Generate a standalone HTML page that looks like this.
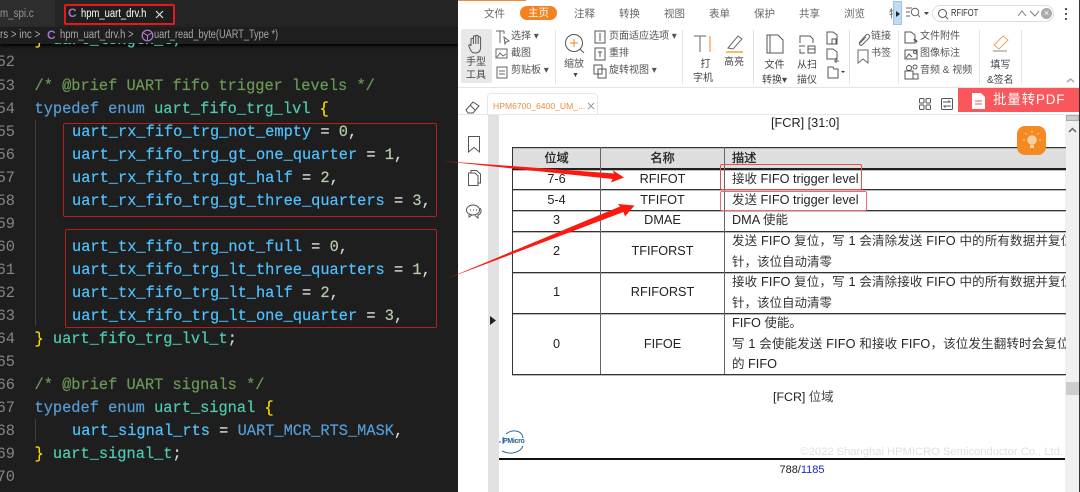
<!DOCTYPE html>
<html lang="zh"><head><meta charset="utf-8"><title>hpm_uart_drv.h</title>
<style>
html,body{margin:0;padding:0;width:1080px;height:492px;overflow:hidden;background:#fff}
#r{position:relative;width:1080px;height:492px;overflow:hidden;font-family:"Liberation Sans","Noto Sans CJK SC",sans-serif}
.a{position:absolute;white-space:nowrap}
.c{position:absolute;left:0;white-space:pre;font:15.33px/23px "Liberation Mono",monospace;color:#d4d4d4;height:23px;-webkit-text-stroke:.2px}
.n{position:absolute;left:-10px;width:25px;text-align:right;white-space:pre;font:15.33px/23px "Liberation Mono",monospace;color:#858585;height:23px}
.k{color:#569cd6}.t{color:#4ec9b0}.v{color:#4fc1ff}.g{color:#b5cea8}.m{color:#6a9955}.y{color:#ffd700}
.rb{position:absolute;border:1px solid #b3211f;border-radius:2px}
.u{font-size:10px;color:#555;line-height:14px}
.tb{font-size:10.5px;color:#666}
.cell{position:absolute;font-size:12.7px;color:#222;line-height:20px;white-space:nowrap}
.ce{text-align:center}
.ds{font-size:12.5px;color:#333}
.hd{-webkit-text-stroke:.3px #222;color:#222;font-size:12.2px}
.hl{position:absolute;background:#333;left:512px;width:554px;box-shadow:0 1px #bbb}
.vl{position:absolute;background:#666;top:147px;height:227px;width:1px}
svg{position:absolute;overflow:visible}
</style></head><body><div id="r">

<!-- editor -->
<div class="a" style="left:0;top:0;width:458px;height:492px;background:#1e1e1e"></div>
<div class="a" style="left:0;top:0;width:458px;height:27px;background:#252526"></div>
<div class="a" style="left:0;top:0;width:55px;height:27px;background:#2d2d2d"></div>
<div class="a" style="left:0;top:7px;font-size:11.5px;color:#969696;line-height:15px;transform:scaleX(.85);transform-origin:left">m_spi.c</div>
<div class="a" style="left:64px;top:4px;width:111px;height:21px;border:2px solid #e11b1b;border-radius:2px;box-sizing:border-box;background:#1e1e1e"></div>
<div class="a" style="left:68px;top:5px;font-size:12px;font-weight:bold;color:#a074c4;line-height:16px">C</div>
<div class="a" style="left:81px;top:7px;font-size:11.5px;color:#fff;line-height:15px;transform:scaleX(.82);transform-origin:left">hpm_uart_drv.h</div>
<svg style="left:155px;top:10px" width="10" height="10"><path d="M1 1L8 8M8 1L1 8" stroke="#ddd" stroke-width="1.2" fill="none"/></svg>
<div class="a" style="left:0;top:27px;width:458px;height:17px;background:#1e1e1e;box-shadow:0 2px 3px #000"></div>
<div class="a" style="left:0;top:28px;font-size:11.5px;color:#a8a8a8;line-height:15px;transform:scaleX(.85);transform-origin:left">rs &gt; inc &gt;</div>
<div class="a" style="left:47px;top:27px;font-size:12px;font-weight:bold;color:#a074c4;line-height:16px">C</div>
<div class="a" style="left:60px;top:28px;font-size:11.5px;color:#a8a8a8;line-height:15px;transform:scaleX(.82);transform-origin:left">hpm_uart_drv.h &gt;</div>
<svg style="left:141px;top:29px" width="13" height="13" viewBox="0 0 13 13"><circle cx="6.5" cy="6.5" r="5.3" fill="none" stroke="#b180d7" stroke-width="1.2"/><path d="M2.5 4L6.5 6.500L10.5 4M6.5 6.500V11" fill="none" stroke="#b180d7"/></svg>
<div class="a" style="left:154px;top:28px;font-size:11.5px;color:#a8a8a8;line-height:15px;transform:scaleX(.8);transform-origin:left">uart_read_byte(UART_Type *)</div>

<div class="c" style="top:29px;left:34.500px;clip-path:inset(14px 0 0 0)"><span class="y">}</span> <span class="t">uart_length_t;</span></div>
<div class="n" style="top:51px">52</div>
<div class="n" style="top:75px">53</div><div class="c m" style="top:75px;left:34.500px">/* @brief UART fifo trigger levels */</div>
<div class="n" style="top:98px">54</div><div class="c" style="top:98px;left:34.500px"><span class="k">typedef enum</span> <span class="t">uart_fifo_trg_lvl</span> <span class="y">{</span></div>
<div class="n" style="top:121px">55</div><div class="c" style="top:121px;left:72px"><span class="v">uart_rx_fifo_trg_not_empty</span> = <span class="g">0</span>,</div>
<div class="n" style="top:144px">56</div><div class="c" style="top:144px;left:72px"><span class="v">uart_rx_fifo_trg_gt_one_quarter</span> = <span class="g">1</span>,</div>
<div class="n" style="top:167px">57</div><div class="c" style="top:167px;left:72px"><span class="v">uart_rx_fifo_trg_gt_half</span> = <span class="g">2</span>,</div>
<div class="n" style="top:190px">58</div><div class="c" style="top:190px;left:72px"><span class="v">uart_rx_fifo_trg_gt_three_quarters</span> = <span class="g">3</span>,</div>
<div class="n" style="top:213px">59</div>
<div class="n" style="top:236px">60</div><div class="c" style="top:236px;left:72px"><span class="v">uart_tx_fifo_trg_not_full</span> = <span class="g">0</span>,</div>
<div class="n" style="top:259px">61</div><div class="c" style="top:259px;left:72px"><span class="v">uart_tx_fifo_trg_lt_three_quarters</span> = <span class="g">1</span>,</div>
<div class="n" style="top:282px">62</div><div class="c" style="top:282px;left:72px"><span class="v">uart_tx_fifo_trg_lt_half</span> = <span class="g">2</span>,</div>
<div class="n" style="top:305px">63</div><div class="c" style="top:305px;left:72px"><span class="v">uart_tx_fifo_trg_lt_one_quarter</span> = <span class="g">3</span>,</div>
<div class="n" style="top:328px">64</div><div class="c" style="top:328px;left:34.500px"><span class="y">}</span> <span class="t">uart_fifo_trg_lvl_t</span>;</div>
<div class="n" style="top:351px">65</div>
<div class="n" style="top:374px">66</div><div class="c m" style="top:374px;left:34.500px">/* @brief UART signals */</div>
<div class="n" style="top:397px">67</div><div class="c" style="top:397px;left:34.500px"><span class="k">typedef enum</span> <span class="t">uart_signal</span> <span class="y">{</span></div>
<div class="n" style="top:420px">68</div><div class="c" style="top:420px;left:72px"><span class="v">uart_signal_rts</span> = <span class="k">UART_MCR_RTS_MASK</span>,</div>
<div class="n" style="top:443px">69</div><div class="c" style="top:443px;left:34.500px"><span class="y">}</span> <span class="t">uart_signal_t</span>;</div>
<div class="n" style="top:466px">70</div>
<div class="a" style="left:35px;top:120px;width:1px;height:206px;background:#404040"></div>
<div class="a" style="left:35px;top:419px;width:1px;height:23px;background:#404040"></div>
<div class="rb" style="left:63px;top:123px;width:372px;height:92px"></div>
<div class="rb" style="left:65px;top:229px;width:370px;height:97px"></div>

<!-- ribbon -->
<div class="a" style="left:458px;top:0;width:622px;height:87px;background:#fff;border-bottom:1px solid #e4e4e4"></div>
<div class="a" style="left:458px;top:0;width:68px;height:1px;background:#f08a3c"></div>
<div class="a tb" style="left:484px;top:6px">文件</div>
<div class="a" style="left:520px;top:6px;width:37px;height:14px;border-radius:8px;background:#f58220;color:#fff;font-size:10.5px;line-height:14px;text-align:center">主页</div>
<div class="a tb" style="left:574px;top:6px">注释</div>
<div class="a tb" style="left:619px;top:6px">转换</div>
<div class="a tb" style="left:664px;top:6px">视图</div>
<div class="a tb" style="left:709px;top:6px">表单</div>
<div class="a tb" style="left:754px;top:6px">保护</div>
<div class="a tb" style="left:799px;top:6px">共享</div>
<div class="a tb" style="left:844px;top:6px">浏览</div>
<div class="a tb" style="left:889px;top:6px;width:4px;overflow:hidden">特</div>
<div class="a" style="left:893px;top:1px;width:9px;height:24px;background:#c0dcf5;border:1px solid #9cc4e6;box-sizing:border-box"></div>
<svg style="left:895px;top:10px" width="6" height="8"><path d="M1 1L5 4L1 7Z" fill="#222"/></svg>
<svg style="left:906px;top:7px" width="22" height="13"><path d="M0 1H6M0 5H4M0 9H4" stroke="#666" fill="none"/><circle cx="9" cy="5" r="3.7" stroke="#666" fill="none"/><path d="M12 8L14 10" stroke="#666"/><path d="M18 5H23L20.500 8Z" fill="#444"/></svg>
<div class="a" style="left:932px;top:5px;width:122px;height:17px;border:1px solid #ddd;border-radius:9px;box-sizing:border-box"></div>
<svg style="left:937px;top:8px" width="12" height="12"><circle cx="5.500" cy="5.500" r="4" stroke="#555" fill="none"/><path d="M8.500 8.500L11 11" stroke="#555"/></svg>
<div class="a" style="left:951px;top:6px;font-size:10.5px;line-height:14px;color:#333;transform:scaleX(.72);transform-origin:left">RFIFOT</div>
<svg style="left:1017px;top:9px" width="27" height="9"><path d="M1 7L5 2L9 7M13 2L18 7L22 2" stroke="#777" fill="none"/></svg>
<div class="a" style="left:1041px;top:8px;width:11px;height:11px;border-radius:6px;background:#aaa;color:#fff;font-size:9px;line-height:11px;text-align:center">×</div>
<div class="a" style="left:1065px;top:8px;width:2px;height:2px;background:#555;box-shadow:0 5px #555,0 10px #555"></div>

<div class="a" style="left:461px;top:29px;width:31px;height:54px;background:#e8e8e8;border-radius:2px"></div>
<svg style="left:466px;top:34px" width="21" height="21" viewBox="0 0 21 21"><path d="M5 12V5.500a1.200 1.200 0 012.400 0V3a1.200 1.200 0 012.400 0V2.500a1.200 1.200 0 012.400 0V4a1.200 1.200 0 012.400 0V13c0 4-2 6-5.500 6S5 17 3 12.500C2 10.500 4.500 10 5 12ZM7.400 5.500V10M9.800 3V10M12.200 3V10" fill="none" stroke="#555"/></svg>
<div class="a u" style="left:466px;top:56px;line-height:13px;text-align:center;color:#444">手型<br>工具</div>
<div class="a u" style="left:511px;top:30px">选择 ▾</div>
<div class="a u" style="left:511px;top:47px">截图</div>
<div class="a u" style="left:511px;top:64px">剪贴板 ▾</div>
<svg style="left:495px;top:30px" width="15" height="50" fill="none" stroke="#666"><path d="M1 1H9M5 1V13M9 1V4"/><path d="M9 7L14 11L11 12L10 14Z"/><rect x="1" y="19" width="11" height="9"/><path d="M2 27L5 23L8 26L11 24"/><rect x="2" y="37" width="10" height="11"/><path d="M4 41H10M4 44H10"/></svg>
<div class="a" style="left:555px;top:30px;width:1px;height:54px;background:#e3e3e3"></div>
<svg style="left:564px;top:33px" width="22" height="22" fill="none"><circle cx="10" cy="10" r="8.500" stroke="#555"/><path d="M6 10H14M10 6V14" stroke="#f58220"/><path d="M16 16L20 20" stroke="#555"/></svg>
<div class="a u" style="left:564px;top:58px">缩放</div>
<div class="a" style="left:572px;top:71px;font-size:7px;color:#444;line-height:10px">▼</div>
<svg style="left:593px;top:30px" width="14" height="50" fill="none" stroke="#555"><rect x="2" y="1" width="10" height="12"/><path d="M7 3V11"/><rect x="2" y="18" width="10" height="12"/><path d="M5 22H9M7 22V27"/><rect x="1" y="35" width="8" height="9"/><rect x="5" y="39" width="8" height="9"/></svg>
<div class="a u" style="left:609px;top:30px">页面适应选项 ▾</div>
<div class="a u" style="left:609px;top:47px">重排</div>
<div class="a u" style="left:609px;top:64px">旋转视图 ▾</div>
<div class="a" style="left:682px;top:30px;width:1px;height:54px;background:#e3e3e3"></div>
<svg style="left:693px;top:35px" width="20" height="18" fill="none" stroke="#666"><path d="M1 1H13M7 1V17"/><path d="M17 1V17" stroke="#f58220"/></svg>
<div class="a u" style="left:698px;top:58px;line-height:14px;text-align:center;color:#444">打<br><span style="margin-left:-5px">字机</span></div>
<svg style="left:725px;top:34px" width="20" height="20" fill="none"><path d="M3 14L13 2L17 5L8 15Z" stroke="#666"/><path d="M1 18H18" stroke="#f5a623" stroke-width="1.500"/></svg>
<div class="a u" style="left:724px;top:56px;color:#444">高亮</div>
<div class="a" style="left:753px;top:30px;width:1px;height:54px;background:#e3e3e3"></div>
<svg style="left:766px;top:34px" width="18" height="20" fill="none" stroke="#555"><path d="M1 1H12L17 6V19H1Z"/><path d="M4 1V19"/></svg>
<div class="a u" style="left:762px;top:58px;color:#444;line-height:15px;text-align:center">文件<br>转换▾</div>
<svg style="left:798px;top:35px" width="18" height="19" fill="none" stroke="#555"><path d="M2 8V1H12L15 4V8M1 11H7M2 14V18H7M10 11H17V18H10ZM10 14H17"/></svg>
<div class="a u" style="left:797px;top:58px;color:#444;line-height:15px;text-align:center">从扫<br>描仪</div>
<svg style="left:826px;top:31px" width="20" height="48" fill="none" stroke="#555"><path d="M1 1H7L11 4V13H1ZM6 8H10V13H6Z"/><path d="M1 18H7L11 21V28H1V18ZM10 27V32M8 30H13"/><path d="M2 36H7L8 38H12V47H2Z"/><path d="M15 40H19L17 42Z" fill="#333" stroke="none"/></svg>
<div class="a" style="left:849px;top:30px;width:1px;height:54px;background:#e3e3e3"></div>
<svg style="left:856px;top:32px" width="14" height="32" fill="none" stroke="#666"><path d="M3 11L10 3a2 2 0 013 3L6 13a1.400 1.400 0 01-2-2L10 5"/><path d="M2 18H12V31L7 27L2 31Z"/></svg>
<div class="a u" style="left:871px;top:30px">链接</div>
<div class="a u" style="left:871px;top:47px">书签</div>
<div class="a" style="left:898px;top:30px;width:1px;height:54px;background:#e3e3e3"></div>
<svg style="left:904px;top:31px" width="16" height="50" fill="none" stroke="#555"><path d="M1 1H7L11 4V12H1Z"/><path d="M10 8L13 11" stroke-width="2"/><rect x="1" y="19" width="12" height="9"/><path d="M2 27L5 23L8 26"/><circle cx="11" cy="21" r="1.500"/><rect x="1" y="40" width="8" height="8"/><circle cx="5" cy="37" r="2.500"/><circle cx="11" cy="36" r="2"/><path d="M9 43H14V48H9"/></svg>
<div class="a u" style="left:920px;top:30px">文件附件</div>
<div class="a u" style="left:920px;top:47px">图像标注</div>
<div class="a u" style="left:920px;top:64px">音频 &amp; 视频</div>
<div class="a" style="left:979px;top:30px;width:1px;height:54px;background:#e3e3e3"></div>
<svg style="left:992px;top:34px" width="18" height="18" fill="none"><path d="M2 11L11 2L16 6L7 15Z" stroke="#f5a05a"/><path d="M1 17H15" stroke="#888"/></svg>
<div class="a u" style="left:987px;top:58px;line-height:15px;text-align:center;color:#444">填写<br>&amp;签名</div>
<div class="a" style="left:1021px;top:30px;width:1px;height:54px;background:#e3e3e3"></div>
<svg style="left:1066px;top:78px" width="9" height="5"><path d="M1 4L4.500 1L8 4" stroke="#aaa" stroke-width="1.500" fill="none"/></svg>

<!-- tab row -->
<div class="a" style="left:458px;top:88px;width:622px;height:26px;background:#fff;border-bottom:1px solid #e8e8e8"></div>
<svg style="left:465px;top:101px" width="15" height="12" fill="none" stroke="#555"><path d="M1 9L8 1L14 5L8 12H3Z"/><path d="M5 4L10 9"/></svg>
<div class="a" style="left:487px;top:93px;width:111px;height:21px;background:#fff;border:1px solid #e6e6e6;border-bottom:0;border-radius:4px 4px 0 0;box-sizing:border-box"></div>
<div class="a" style="left:493px;top:100px;font-size:8.600px;line-height:12px;color:#f08a3c">HPM6700_6400_UM_...</div>
<svg style="left:587px;top:102px" width="9" height="9"><path d="M1 1L7 7M7 1L1 7" stroke="#999" fill="none"/></svg>
<svg style="left:919px;top:98px" width="12" height="12" fill="none" stroke="#555"><rect x=".5" y=".5" width="4.500" height="4.500" rx="1"/><rect x="7" y=".5" width="4.500" height="4.500" rx="1"/><rect x=".5" y="7" width="4.500" height="4.500" rx="1"/><rect x="7" y="7" width="4.500" height="4.500" rx="1"/></svg>
<svg style="left:941px;top:98px" width="12" height="12" fill="none" stroke="#555"><rect x=".5" y=".5" width="11" height="11" rx="1"/><path d="M2 4H9L7.500 2.500M10 8H3L4.500 9.500"/></svg>
<div class="a" style="left:958px;top:88px;width:121px;height:24px;background:#f9575b"></div>
<svg style="left:972px;top:93px" width="13" height="16"><path d="M0 0H9L13 4V16H0Z" fill="#fff"/><path d="M3 8H10M3 11H10" stroke="#f9575b"/></svg>
<div class="a" style="left:993px;top:91px;font-size:13.500px;line-height:18px;color:#fff;letter-spacing:.8px">批量转PDF</div>

<!-- doc -->
<div class="a" style="left:488px;top:115px;width:11px;height:377px;background:#e2e2e2"></div>
<svg style="left:468px;top:136px" width="12" height="17" fill="none" stroke="#555"><path d="M.5.5H11.500V16L6 11.500L.5 16Z"/></svg>
<svg style="left:468px;top:170px" width="13" height="16" fill="none" stroke="#555"><path d="M3 3V.5H8.500L12.500 4V13H10"/><path d="M.5 3H7L10 6V15.500H.5Z"/></svg>
<svg style="left:466px;top:204px" width="16" height="15" fill="none" stroke="#555"><ellipse cx="7" cy="6" rx="6.500" ry="5"/><path d="M3 10.500L3 13L6 11"/><path d="M14 4C16 7 15 10 12 11L12 14L9 11.500"/><path d="M4 6H5M7 6H8M10 6H11"/></svg>
<svg style="left:490px;top:316px" width="6" height="9"><path d="M0 0L6 4.500L0 9Z" fill="#222"/></svg>
<div class="a" style="left:1065px;top:115px;width:14px;height:377px;background:#f0f0f0"></div>
<div class="a" style="left:1079px;top:0;width:1px;height:492px;background:#333"></div>
<div class="a" style="left:1066px;top:115px;width:13px;height:6px;background:#ccc;border:1px solid #aaa;box-sizing:border-box"></div>
<svg style="left:1068px;top:127px" width="9" height="6"><path d="M1 5L4.500 1.500L8 5" stroke="#666" stroke-width="1.500" fill="none"/></svg>
<div class="a" style="left:1066px;top:382px;width:13px;height:13px;background:#cdcdcd"></div>

<div class="a" style="left:771px;top:115px;font-size:12.700px;color:#222;line-height:16px">[FCR] [31:0]</div>

<div class="a" style="left:512px;top:147px;width:554px;height:22px;background:#dedede"></div>
<div class="hl" style="top:147px;height:1px"></div>
<div class="hl" style="top:168px;height:2px;background:#222"></div>
<div class="hl" style="top:189px;height:1px"></div>
<div class="hl" style="top:210px;height:1px"></div>
<div class="hl" style="top:231px;height:1px"></div>
<div class="hl" style="top:272px;height:1px"></div>
<div class="hl" style="top:313px;height:1px"></div>
<div class="hl" style="top:374px;height:1px"></div>
<div class="vl" style="left:512px;background:#333"></div>
<div class="vl" style="left:600px"></div>
<div class="vl" style="left:724px"></div>

<div class="cell ce hd" style="left:513px;width:87px;top:148px">位域</div>
<div class="cell ce hd" style="left:601px;width:123px;top:148px">名称</div>
<div class="cell hd" style="left:732px;top:148px">描述</div>
<div class="cell ce" style="left:513px;width:87px;top:169px">7-6</div>
<div class="cell ce" style="left:601px;width:123px;top:169px">RFIFOT</div>
<div class="cell" style="left:732px;top:169px"><span class="ds">接收</span> FIFO trigger level</div>
<div class="cell ce" style="left:513px;width:87px;top:190px">5-4</div>
<div class="cell ce" style="left:601px;width:123px;top:190px">TFIFOT</div>
<div class="cell" style="left:732px;top:190px"><span class="ds">发送</span> FIFO trigger level</div>
<div class="cell ce" style="left:513px;width:87px;top:210px">3</div>
<div class="cell ce" style="left:601px;width:123px;top:210px">DMAE</div>
<div class="cell" style="left:732px;top:210px">DMA <span class="ds">使能</span></div>
<div class="cell ce" style="left:513px;width:87px;top:241px">2</div>
<div class="cell ce" style="left:601px;width:123px;top:241px">TFIFORST</div>
<div class="cell" style="left:732px;top:231px;width:334px;overflow:hidden;letter-spacing:.15px"><span class="ds">发送</span> FIFO <span class="ds">复位，写</span> 1 <span class="ds">会清除发送</span> FIFO <span class="ds">中的所有数据并复位</span></div>
<div class="cell ds" style="left:732px;top:252px">针，该位自动清零</div>
<div class="cell ce" style="left:513px;width:87px;top:282px">1</div>
<div class="cell ce" style="left:601px;width:123px;top:282px">RFIFORST</div>
<div class="cell" style="left:732px;top:272px;width:334px;overflow:hidden;letter-spacing:.15px"><span class="ds">接收</span> FIFO <span class="ds">复位，写</span> 1 <span class="ds">会清除接收</span> FIFO <span class="ds">中的所有数据并复位</span></div>
<div class="cell ds" style="left:732px;top:293px">针，该位自动清零</div>
<div class="cell ce" style="left:513px;width:87px;top:334px">0</div>
<div class="cell ce" style="left:601px;width:123px;top:334px">FIFOE</div>
<div class="cell" style="left:732px;top:313px">FIFO <span class="ds">使能。</span></div>
<div class="cell" style="left:732px;top:334px;width:334px;overflow:hidden;letter-spacing:.15px"><span class="ds">写</span> 1 <span class="ds">会使能发送</span> FIFO <span class="ds">和接收</span> FIFO<span class="ds">，该位发生翻转时会复位</span></div>
<div class="cell" style="left:732px;top:354px"><span class="ds">的</span> FIFO</div>

<div class="a" style="left:720px;top:164px;width:142px;height:26px;border:1px solid #e7504c;border-radius:2px;box-sizing:border-box"></div>
<div class="a" style="left:720px;top:191px;width:147px;height:20px;border:1px solid #ef6b6b;border-radius:2px;box-sizing:border-box"></div>

<div class="a" style="left:1017px;top:126px;width:29px;height:29px;border-radius:8px;background:#f58a23"></div>
<svg style="left:1021px;top:130px" width="22" height="22" fill="none"><circle cx="11" cy="10" r="4.800" fill="#fbd0a0"/><rect x="9" y="15" width="4" height="3" fill="#fbd0a0"/><path d="M11 1V3M4 3L5.500 4.500M18 3L16.500 4.500M2 10H4M18 10H20" stroke="#fbd0a0"/></svg>

<div class="a" style="left:773px;top:389px;font-size:12.400px;line-height:16px;color:#222">[FCR] <span style="color:#444">位域</span></div>
<svg style="left:498px;top:429px" width="30" height="26" fill="none"><path d="M8 5C14 0 24 1 25 9M25 17C22 24 12 26 4 22" stroke="#2d6da3"/><path d="M1 13H3M5 15V8" stroke="#2d6da3"/></svg>
<div class="a" style="left:503px;top:437px;font-size:7px;font-weight:bold;line-height:10px;color:#1f5f99;letter-spacing:-.3px">PMicro</div>
<div class="a" style="left:743px;top:445px;width:323px;text-align:right;font-size:11.200px;line-height:14px;color:#e0e0e0;box-sizing:border-box;padding-right:3px;">©2022 Shanghai HPMICRO Semiconductor Co., Ltd.</div>
<div class="a" style="left:499px;top:458px;width:566px;height:2px;background:#111"></div>
<div class="a" style="left:729px;top:463px;width:146px;text-align:center;font-size:11px;line-height:15px;color:#222">788/<span style="color:#2222dd">1185</span></div>

<!-- arrows -->
<svg style="left:0;top:0" width="1080" height="492"><path d="M442 161L614 173.500L612.500 170L624 177.500L611 182.500L612.500 179Z" fill="#fb1a10"/><path d="M446 279L620 206.500L618 204L634.500 205.500L625 216.500L623.500 212Z" fill="#fb1a10"/></svg>

</div></body></html>
